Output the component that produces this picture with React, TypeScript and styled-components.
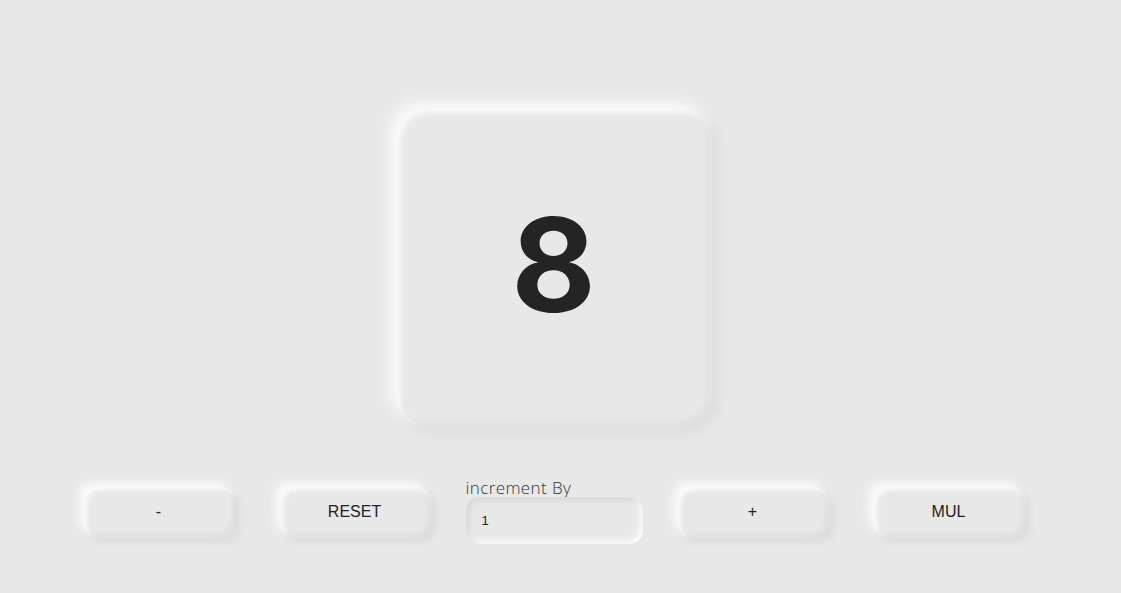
import { useState } from "react";
import { createGlobalStyle, styled } from "styled-components";

const GlobalStyle = createGlobalStyle`
  * {
    box-sizing: border-box;
  }
  body {
    margin: 0;
    background: #e8e8e8;
    font-family: "Liberation Sans", Arial, sans-serif;
  }
`;

const Page = styled.div`
  display: flex;
  flex-direction: column;
  align-items: center;
  min-height: 100vh;
  padding: 108px 14px 0 0;
  gap: 53px;
`;

const Display = styled.div`
  width: 315px;
  height: 318px;
  border-radius: 30px;
  background: #e8e8e8;
  display: flex;
  align-items: center;
  justify-content: center;
  box-shadow: -6px -6px 14px rgba(255, 255, 255, 0.8),
    6px 6px 14px rgba(0, 0, 0, 0.06), inset 4px 4px 6px rgba(255, 255, 255, 0.85),
    inset -4px -4px 6px rgba(0, 0, 0, 0.04);

  span {
    font-family: Inter, "Noto Sans", sans-serif;
    font-weight: 700;
    font-size: 130px;
    color: #242424;
    line-height: 1;
    margin-top: -4px;
  }
`;

const Controls = styled.div`
  display: flex;
  align-items: center;
`;

const Button = styled.button<{ $gap: number }>`
  width: 150px;
  height: 50px;
  margin-right: ${(p) => p.$gap}px;
  border: none;
  border-radius: 13px;
  background: #e8e8e8;
  font-family: "Liberation Sans", Arial, sans-serif;
  font-size: 16px;
  color: #222;
  cursor: pointer;
  box-shadow: -5px -5px 10px rgba(255, 255, 255, 0.8),
    5px 5px 10px rgba(0, 0, 0, 0.06), inset 3px 3px 5px rgba(255, 255, 255, 0.85),
    inset -3px -3px 5px rgba(0, 0, 0, 0.04);
`;

const Field = styled.label`
  display: flex;
  flex-direction: column;
  width: 177px;
  margin-right: 35px;

  span {
    font-family: "Open Sans", Lato, sans-serif;
    font-weight: 300;
    font-size: 17px;
    letter-spacing: 0.4px;
    color: #333;
    line-height: 18px;
  }

  input {
    height: 47px;
    border: none;
    outline: none;
    border-radius: 14px;
    background: #e8e8e8;
    padding: 0 16px;
    font-family: "Liberation Sans", Arial, sans-serif;
    font-size: 13px;
    color: #222;
    box-shadow: inset 3px 3px 6px rgba(0, 0, 0, 0.08),
      inset -3px -3px 6px rgba(255, 255, 255, 0.9);
  }
`;

export default function App() {
  const [count, setCount] = useState(8);
  const [step, setStep] = useState("1");
  const by = Number(step) || 0;

  return (
    <>
      <GlobalStyle />
      <Page>
        <Display>
          <span>{count}</span>
        </Display>
        <Controls>
          <Button $gap={46} onClick={() => setCount(count - by)}>
            -
          </Button>
          <Button $gap={36} onClick={() => setCount(0)}>
            RESET
          </Button>
          <Field>
            <span>increment By</span>
            <input value={step} onChange={(e) => setStep(e.target.value)} />
          </Field>
          <Button $gap={46} onClick={() => setCount(count + by)}>
            +
          </Button>
          <Button $gap={0} onClick={() => setCount(count * by)}>
            MUL
          </Button>
        </Controls>
      </Page>
    </>
  );
}
